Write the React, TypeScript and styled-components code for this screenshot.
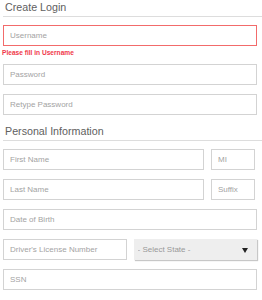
import React from "react";
import styled, { createGlobalStyle } from "styled-components";

const GlobalStyle = createGlobalStyle`
    body {
        margin: 0;
        background: #fff;
        font-family: "Liberation Sans", Arial, sans-serif;
    }
    * {
        box-sizing: border-box;
    }
`;

const Form = styled.form`
    padding: 0 5px 0 3px;
    width: 262px;
`;

const SectionTitle = styled.h2<{ $first?: boolean }>`
    margin: ${(p) => (p.$first ? "0" : "5px")} -5px 8px 0;
    padding: 0 0 2px 2px;
    font-size: 10.7px;
    line-height: 14px;
    font-weight: normal;
    color: #606060;
    border-bottom: 1px solid #ddd;
`;

const Field = styled.div`
    margin-bottom: 9px;
`;

const Row = styled.div<{ $cols: string }>`
    display: grid;
    grid-template-columns: ${(p) => p.$cols};
    gap: 7px;
    margin-bottom: 9px;
`;

const Input = styled.input<{ $invalid?: boolean }>`
    display: block;
    width: 100%;
    height: 21px;
    padding: 0 6px;
    border: 1px solid ${(p) => (p.$invalid ? "#f26b6b" : "#d3d3d3")};
    border-radius: 0;
    font-family: inherit;
    font-size: 8px;
    color: #333;
    outline: none;

    &::placeholder {
        color: #a3a3a3;
    }
`;

const ErrorText = styled.div`
    margin: 2px 0 -2px -1px;
    font-size: 6.6px;
    line-height: 9px;
    font-weight: bold;
    color: #f0384a;
`;

const SelectWrap = styled.div`
    position: relative;
    height: 21px;
    background: #eee;
    box-shadow: 1px 1px 1px rgba(0, 0, 0, 0.22);
`;

const Select = styled.select`
    display: block;
    width: 100%;
    height: 100%;
    padding: 0 4px;
    border: none;
    background: transparent;
    appearance: none;
    font-family: inherit;
    font-size: 8px;
    color: #999;
    outline: none;
`;

const Arrow = styled.span`
    position: absolute;
    right: 9px;
    top: 9px;
    width: 0;
    height: 0;
    border-left: 3.5px solid transparent;
    border-right: 3.5px solid transparent;
    border-top: 5px solid #222;
    pointer-events: none;
`;

const App = () => {
    return (
        <>
            <GlobalStyle />
            <Form>
                <SectionTitle $first>Create Login</SectionTitle>
                <Field>
                    <Input $invalid placeholder="Username" />
                    <ErrorText>Please fill in Username</ErrorText>
                </Field>
                <Field>
                    <Input type="password" placeholder="Password" />
                </Field>
                <Field>
                    <Input type="password" placeholder="Retype Password" />
                </Field>

                <SectionTitle>Personal Information</SectionTitle>
                <Row $cols="201px 44px">
                    <Input placeholder="First Name" />
                    <Input placeholder="MI" />
                </Row>
                <Row $cols="201px 44px">
                    <Input placeholder="Last Name" />
                    <Input placeholder="Suffix" />
                </Row>
                <Field>
                    <Input placeholder="Date of Birth" />
                </Field>
                <Row $cols="1fr 1fr">
                    <Input placeholder="Driver's License Number" />
                    <SelectWrap>
                        <Select defaultValue="">
                            <option value="">- Select State -</option>
                        </Select>
                        <Arrow />
                    </SelectWrap>
                </Row>
                <Field>
                    <Input placeholder="SSN" />
                </Field>
            </Form>
        </>
    );
};

export default App;
